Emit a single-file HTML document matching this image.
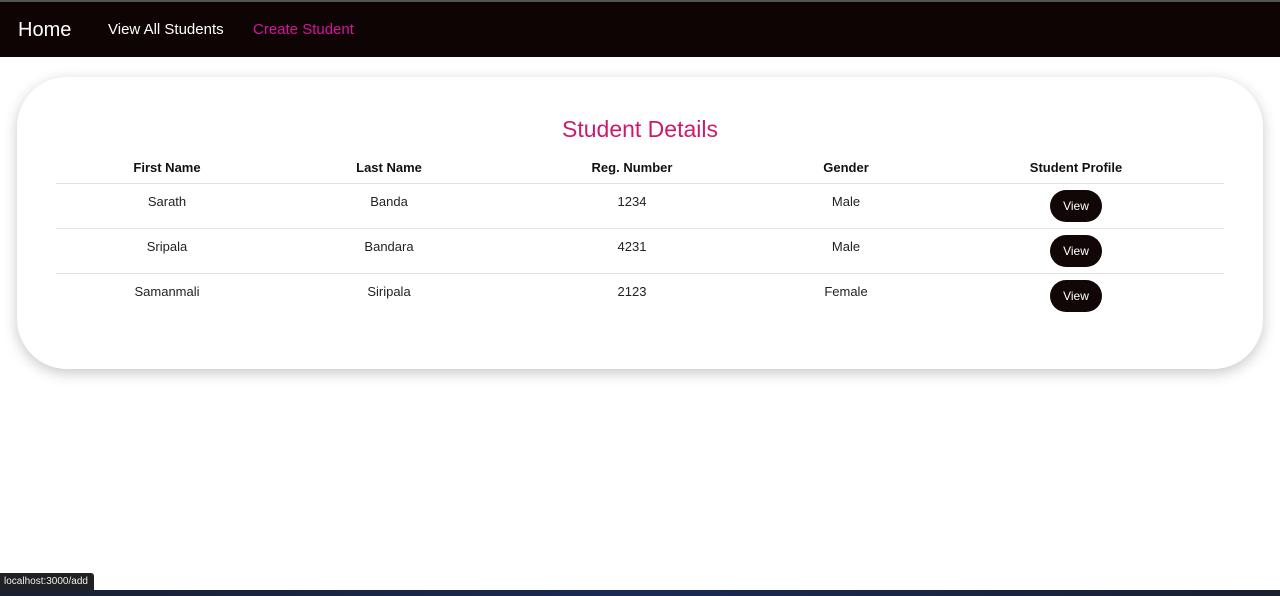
<!DOCTYPE html><html><head><style>
body{margin:0;width:1280px;height:596px;position:relative;overflow:hidden;background:#fff;font-family:"Liberation Sans",sans-serif;}
.a{position:absolute;white-space:nowrap}
.c{transform:translateX(-50%);font-size:13px;color:#222}
.h{font-weight:bold;color:#111}
.line{position:absolute;left:56px;width:1168px;height:1px;background:#e2e2e2}
.btn{position:absolute;left:1050px;width:52px;height:32px;border-radius:16px;background:#110707;color:#fff;font-size:12px;text-align:center;line-height:32px}
</style></head><body>
<div class="a" style="left:0;top:0;width:1280px;height:2px;background:#555"></div>
<div class="a" style="left:0;top:2px;width:1280px;height:55px;background:#0f0404"></div>
<div class="a" style="left:18px;top:19px;font-size:20px;color:#fff">Home</div>
<div class="a" style="left:108px;top:21px;font-size:15px;color:#fff">View All Students</div>
<div class="a" style="left:253px;top:21px;font-size:15px;color:#d613a0">Create Student</div>
<div class="a" style="left:17px;top:77px;width:1246px;height:292px;border-radius:50px;background:#fff;box-shadow:0 4px 14px rgba(0,0,0,.22)"></div>
<div class="a c" style="left:640px;top:116px;font-size:23px;color:#cf1a6c">Student Details</div>
<div class="a c h" style="left:167px;top:160px">First Name</div>
<div class="a c h" style="left:389px;top:160px">Last Name</div>
<div class="a c h" style="left:632px;top:160px">Reg. Number</div>
<div class="a c h" style="left:846px;top:160px">Gender</div>
<div class="a c h" style="left:1076px;top:160px">Student Profile</div>
<div class="line" style="top:183px"></div><div class="line" style="top:228px"></div><div class="line" style="top:273px"></div>
<div class="a c" style="left:167px;top:194px">Sarath</div><div class="a c" style="left:389px;top:194px">Banda</div><div class="a c" style="left:632px;top:194px">1234</div><div class="a c" style="left:846px;top:194px">Male</div>
<div class="a c" style="left:167px;top:239px">Sripala</div><div class="a c" style="left:389px;top:239px">Bandara</div><div class="a c" style="left:632px;top:239px">4231</div><div class="a c" style="left:846px;top:239px">Male</div>
<div class="a c" style="left:167px;top:284px">Samanmali</div><div class="a c" style="left:389px;top:284px">Siripala</div><div class="a c" style="left:632px;top:284px">2123</div><div class="a c" style="left:846px;top:284px">Female</div>
<div class="btn" style="top:190px">View</div><div class="btn" style="top:235px">View</div><div class="btn" style="top:280px">View</div>
<div class="a" style="left:0;top:590px;width:1280px;height:6px;background:linear-gradient(90deg,#1a2030,#1a2a55,#1a2030)"></div>
<div class="a" style="left:0;top:573px;width:94px;height:17px;background:#202124;border-radius:0 3px 0 0;color:#eee;font-size:10px;line-height:17px;padding-left:4px;box-sizing:border-box">localhost:3000/add</div>
</body></html>
